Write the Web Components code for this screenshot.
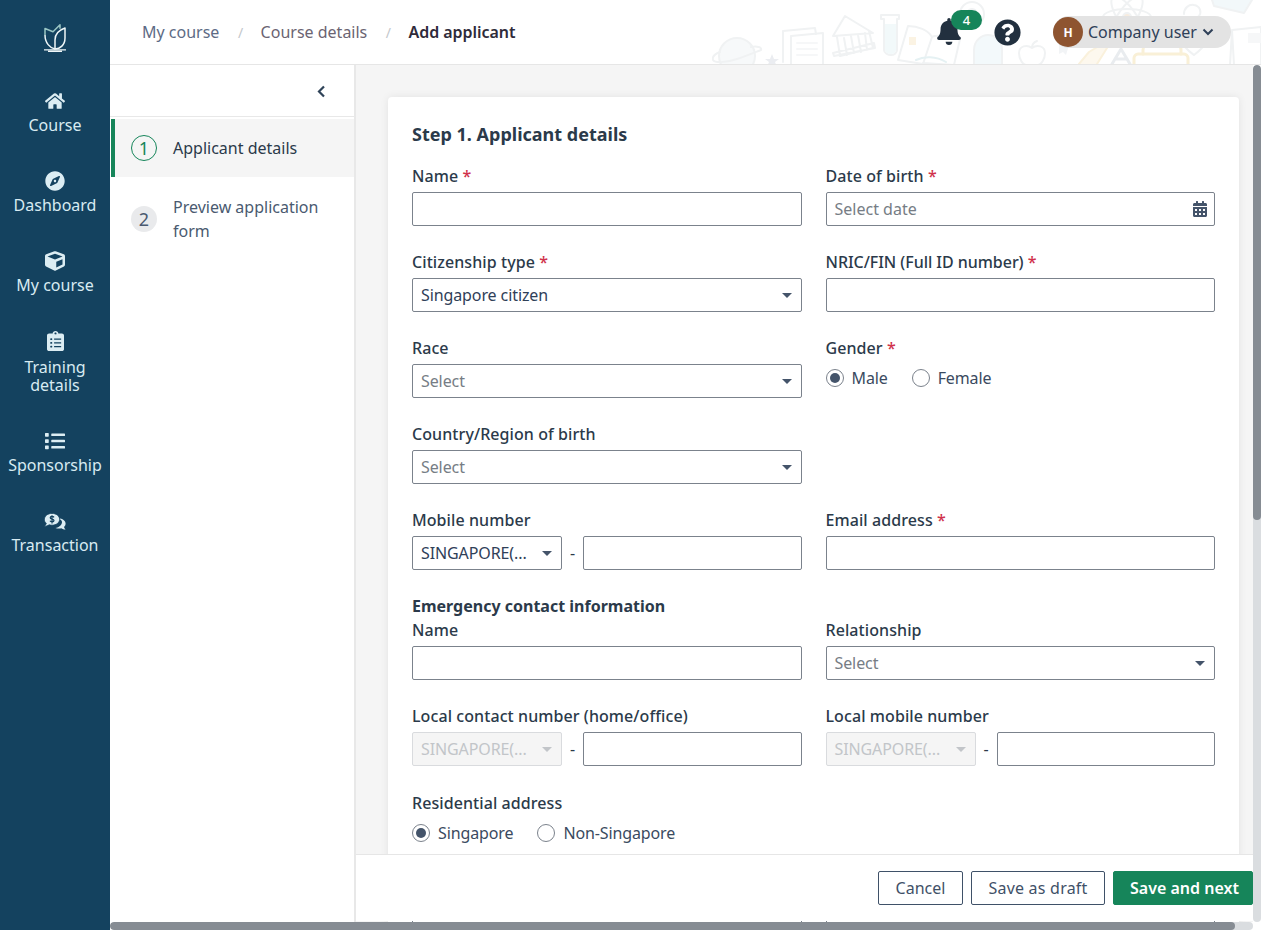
<!DOCTYPE html>
<html lang="en">
<head>
<meta charset="utf-8">
<title>Add applicant</title>
<style>
html,body{margin:0;padding:0;height:100%;overflow:hidden;background:#fff;font-family:"Noto Sans","Open Sans",sans-serif;font-size:16px;color:#2b3a4a}
</style>
</head>
<body>
<app-shell>
  <side-nav slot="nav">
    <nav-item icon="home">Course</nav-item>
    <nav-item icon="compass">Dashboard</nav-item>
    <nav-item icon="cube">My course</nav-item>
    <nav-item icon="clipboard" tall>Training<br>details</nav-item>
    <nav-item icon="list">Sponsorship</nav-item>
    <nav-item icon="chat">Transaction</nav-item>
  </side-nav>
  <top-bar slot="top"></top-bar>
  <step-panel slot="steps">
    <step-item num="1" active>Applicant details</step-item>
    <step-item num="2">Preview application form</step-item>
  </step-panel>
  <form-area slot="main">
    <form-card heading="Step 1. Applicant details">
      <form-field label="Name" required><text-box></text-box></form-field>
      <form-field label="Date of birth" required><text-box placeholder="Select date" calendar></text-box></form-field>
      <form-field label="Citizenship type" required><select-box>Singapore citizen</select-box></form-field>
      <form-field label="NRIC/FIN (Full ID number)" required class="tight"><text-box></text-box></form-field>
      <form-field label="Race"><select-box placeholder>Select</select-box></form-field>
      <form-field label="Gender" required><radio-group><radio-opt checked>Male</radio-opt><radio-opt>Female</radio-opt></radio-group></form-field>
      <form-field label="Country/Region of birth"><select-box placeholder>Select</select-box></form-field>
      <form-field></form-field>
      <form-field label="Mobile number"><phone-input></phone-input></form-field>
      <form-field label="Email address" required><text-box></text-box></form-field>
      <form-field label="Name" section="Emergency contact information"><text-box></text-box></form-field>
      <form-field label="Relationship" class="low"><select-box placeholder>Select</select-box></form-field>
      <form-field label="Local contact number (home/office)"><phone-input disabled></phone-input></form-field>
      <form-field label="Local mobile number"><phone-input disabled></phone-input></form-field>
      <form-field label="Residential address" class="nudge"><radio-group><radio-opt checked>Singapore</radio-opt><radio-opt>Non-Singapore</radio-opt></radio-group></form-field>
      <form-field></form-field>
      <form-field class="spacer"><text-box></text-box></form-field>
      <form-field class="spacer"><text-box></text-box></form-field>
    </form-card>
    <form-footer slot="footer">
      <app-button width="85">Cancel</app-button>
      <app-button width="134" track>Save as draft</app-button>
      <app-button width="140" primary>Save and next</app-button>
    </form-footer>
  </form-area>
  <scroll-bar slot="vbar" thumb="455"></scroll-bar>
  <scroll-bar slot="hbar" horizontal thumb="1125"></scroll-bar>
</app-shell>

<script>
const ICONS = {
  home:['0 0 576 512','M280.37 148.26L96 300.11V464a16 16 0 0 0 16 16l112.06-.29a16 16 0 0 0 15.92-16V368a16 16 0 0 1 16-16h64a16 16 0 0 1 16 16v95.64a16 16 0 0 0 16 16.05L464 480a16 16 0 0 0 16-16V300L295.67 148.26a12.19 12.19 0 0 0-15.3 0zM571.6 251.47L488 182.56V44.05a12 12 0 0 0-12-12h-56a12 12 0 0 0-12 12v72.61L318.47 43a48 48 0 0 0-61 0L4.34 251.47a12 12 0 0 0-1.6 16.9l25.5 31A12 12 0 0 0 45.15 301l235.22-193.74a12.19 12.19 0 0 1 15.3 0L530.9 301a12 12 0 0 0 16.9-1.6l25.5-31a12 12 0 0 0-1.7-16.93z'],
  compass:['0 0 496 512','M225.38 233.37c-12.5 12.5-12.5 32.76 0 45.25 12.49 12.5 32.76 12.5 45.25 0 12.5-12.5 12.5-32.76 0-45.25-12.5-12.49-32.76-12.49-45.25 0zM248 8C111.03 8 0 119.03 0 256s111.03 248 248 248 248-111.03 248-248S384.97 8 248 8zm126.14 148.05L308.17 300.4a31.938 31.938 0 0 1-15.77 15.77l-144.34 65.97c-16.65 7.61-33.81-9.55-26.2-26.2l65.98-144.35a31.938 31.938 0 0 1 15.77-15.77l144.34-65.97c16.65-7.6 33.8 9.55 26.19 26.2z'],
  cube:['0 0 512 512','M239.1 6.3l-208 78c-18.7 7-31.1 25-31.1 45v225.1c0 18.2 10.3 34.8 26.5 42.9l208 104c13.5 6.8 29.4 6.8 42.9 0l208-104c16.3-8.1 26.5-24.8 26.5-42.9V129.3c0-20-12.4-37.9-31.1-44.9l-208-78C262 2.2 250 2.2 239.1 6.3zM256 68.4l192 72v1.1l-192 78-192-78v-1.1l192-72zm32 356V275.5l160-65v133.9l-160 80z'],
  clipboard:['0 0 384 512','M336 64h-80c0-35.3-28.7-64-64-64s-64 28.7-64 64H48C21.5 64 0 85.5 0 112v352c0 26.5 21.5 48 48 48h288c26.5 0 48-21.5 48-48V112c0-26.5-21.5-48-48-48zM96 424c-13.3 0-24-10.7-24-24s10.7-24 24-24 24 10.7 24 24-10.7 24-24 24zm0-96c-13.3 0-24-10.7-24-24s10.7-24 24-24 24 10.7 24 24-10.7 24-24 24zm0-96c-13.3 0-24-10.7-24-24s10.7-24 24-24 24 10.7 24 24-10.7 24-24 24zm96-192c13.3 0 24 10.7 24 24s-10.7 24-24 24-24-10.7-24-24 10.7-24 24-24zm128 368c0 4.4-3.6 8-8 8H168c-4.4 0-8-3.6-8-8v-16c0-4.4 3.6-8 8-8h144c4.4 0 8 3.6 8 8v16zm0-96c0 4.4-3.6 8-8 8H168c-4.4 0-8-3.6-8-8v-16c0-4.4 3.6-8 8-8h144c4.4 0 8 3.6 8 8v16zm0-96c0 4.4-3.6 8-8 8H168c-4.4 0-8-3.6-8-8v-16c0-4.4 3.6-8 8-8h144c4.4 0 8 3.6 8 8v16z'],
  list:['0 0 512 512','M80 368H16a16 16 0 0 0-16 16v64a16 16 0 0 0 16 16h64a16 16 0 0 0 16-16v-64a16 16 0 0 0-16-16zm0-320H16A16 16 0 0 0 0 64v64a16 16 0 0 0 16 16h64a16 16 0 0 0 16-16V64a16 16 0 0 0-16-16zm0 160H16a16 16 0 0 0-16 16v64a16 16 0 0 0 16 16h64a16 16 0 0 0 16-16v-64a16 16 0 0 0-16-16zm416 176H176a16 16 0 0 0-16 16v32a16 16 0 0 0 16 16h320a16 16 0 0 0 16-16v-32a16 16 0 0 0-16-16zm0-320H176a16 16 0 0 0-16 16v32a16 16 0 0 0 16 16h320a16 16 0 0 0 16-16V80a16 16 0 0 0-16-16zm0 160H176a16 16 0 0 0-16 16v32a16 16 0 0 0 16 16h320a16 16 0 0 0 16-16v-32a16 16 0 0 0-16-16z'],
  bell:['0 0 448 512','M224 512c35.32 0 63.97-28.65 63.97-64H160.03c0 35.35 28.65 64 63.97 64zm215.39-149.71c-19.32-20.76-55.47-51.99-55.47-154.29 0-77.7-54.48-139.9-127.94-155.16V32c0-17.67-14.32-32-31.98-32s-31.98 14.33-31.98 32v20.84C118.56 68.1 64.08 130.3 64.08 208c0 102.3-36.15 133.53-55.47 154.29-6 6.45-8.66 14.16-8.61 21.71.11 16.4 12.98 32 32.1 32h383.8c19.12 0 32-15.6 32.1-32 .05-7.55-2.61-15.27-8.61-21.71z'],
  help:['0 0 512 512','M504 256c0 136.997-111.043 248-248 248S8 392.997 8 256C8 119.083 119.043 8 256 8s248 111.083 248 248zM262.655 90c-54.497 0-89.255 22.957-116.549 63.758-3.536 5.286-2.353 12.415 2.715 16.258l34.699 26.31c5.205 3.947 12.621 3.008 16.665-2.122 17.864-22.658 30.113-35.797 57.303-35.797 20.429 0 45.698 13.148 45.698 32.958 0 14.976-12.363 22.667-32.534 33.976C247.128 238.528 216 254.941 216 296v4c0 6.627 5.373 12 12 12h56c6.627 0 12-5.373 12-12v-1.333c0-28.462 83.186-29.647 83.186-106.667 0-58.002-60.165-102-116.531-102zM256 338c-25.365 0-46 20.635-46 46 0 25.364 20.635 46 46 46s46-20.636 46-46c0-25.365-20.635-46-46-46z'],
  calendar:['0 0 448 512','M0 464c0 26.5 21.5 48 48 48h352c26.5 0 48-21.5 48-48V192H0v272zm320-196c0-6.6 5.4-12 12-12h40c6.6 0 12 5.4 12 12v40c0 6.6-5.4 12-12 12h-40c-6.6 0-12-5.4-12-12v-40zm0 128c0-6.6 5.4-12 12-12h40c6.6 0 12 5.4 12 12v40c0 6.6-5.4 12-12 12h-40c-6.6 0-12-5.4-12-12v-40zM192 268c0-6.6 5.4-12 12-12h40c6.6 0 12 5.4 12 12v40c0 6.6-5.4 12-12 12h-40c-6.6 0-12-5.4-12-12v-40zm0 128c0-6.6 5.4-12 12-12h40c6.6 0 12 5.4 12 12v40c0 6.6-5.4 12-12 12h-40c-6.6 0-12-5.4-12-12v-40zM64 268c0-6.6 5.4-12 12-12h40c6.6 0 12 5.4 12 12v40c0 6.6-5.4 12-12 12H76c-6.6 0-12-5.4-12-12v-40zm0 128c0-6.6 5.4-12 12-12h40c6.6 0 12 5.4 12 12v40c0 6.6-5.4 12-12 12H76c-6.6 0-12-5.4-12-12v-40zM400 64h-48V16c0-8.8-7.2-16-16-16h-32c-8.8 0-16 7.2-16 16v48H160V16c0-8.8-7.2-16-16-16h-32c-8.8 0-16 7.2-16 16v48H48C21.5 64 0 85.5 0 112v48h448v-48c0-26.5-21.5-48-48-48z']
};
const NAVY='#14425f';
function svgIcon(name,w,h,fill,extra=''){
  if(name==='chat'){
    return `<svg width="22" height="17" viewBox="0 0 22 17" aria-hidden="true">
      <path fill="${fill}" d="M13 5.5c4.7-.6 8.6 1.6 8.6 5 0 1.4-.6 2.6-1.6 3.5.3 1 .9 1.9 1.6 2.6-1.7 0-3.2-.5-4.3-1.3-1.8.5-4.2.4-5.9-.4 4-.6 6.6-3.1 6.6-6 0-1.4-1.1-2.7-5-3.4z"/>
      <path fill="${fill}" stroke="${NAVY}" stroke-width=".8" d="M8 .4c4.3 0 7.6 2.6 7.6 5.9s-3.3 5.9-7.6 5.9c-1 0-2-.2-2.9-.4-1.2.9-2.7 1.5-4.7 1.5.8-.8 1.6-1.9 1.9-3.1C.9 9.5.4 8 .4 6.3.4 3 3.7.4 8 .4z"/>
      <path fill="none" stroke="${NAVY}" stroke-width="1.2" d="M10 4.4c-.4-.7-1.2-1-2-1-1 0-1.8.5-1.8 1.3 0 1.8 3.8.9 3.8 2.8 0 .8-.9 1.3-1.9 1.3s-1.8-.4-2.1-1.1M8 2.2v8.2"/>
    </svg>`;
  }
  const [vb,d]=ICONS[name];
  return `<svg width="${w}" height="${h}" viewBox="${vb}" ${extra} aria-hidden="true" style="display:block"><path fill="${fill}" d="${d}"/></svg>`;
}
const NAV_SIZE={home:[20,18],compass:[20,20],cube:[20,20],clipboard:[17,20,'preserveAspectRatio="none"'],list:[20,20],chat:[22,17]};
function comp(tag,render){
  customElements.define(tag,class extends HTMLElement{
    constructor(){super();this.attachShadow({mode:'open'}).innerHTML=render(this);}
  });
}

comp('app-button',h=>{
  const p=h.hasAttribute('primary');
  return `<style>
:host{display:inline-flex}
button{font:inherit;font-weight:${p?600:400};width:${h.getAttribute('width')}px;height:34px;padding:${p?'0 0 0 16px':'0'};text-align:${p?'left':'center'};box-sizing:border-box;border-radius:2px;cursor:pointer;
${h.hasAttribute('track')?'letter-spacing:.22px;':''}
${p?'background:#16855a;border:1px solid #16855a;color:#fff;':'background:#fff;border:1px solid #3f5168;color:#3f5168;'}white-space:nowrap}
</style><button type="button"><slot></slot></button>`;
});

comp('form-footer',()=>`<style>
:host{display:flex;justify-content:flex-end;align-items:flex-start;gap:8px;box-sizing:border-box;height:67px;padding-top:16px;background:#fff;border-top:1px solid #e6e6e6}
</style><slot></slot>`);

comp('text-box',h=>`<style>
:host{display:flex;align-items:center;justify-content:space-between;box-sizing:border-box;height:34px;padding:0 7px 0 8px;background:#fff;border:1px solid #7b828c;border-radius:2px;color:#767d85;white-space:nowrap}
</style><span>${h.getAttribute('placeholder')||''}</span>${h.hasAttribute('calendar')?svgIcon('calendar',14,16,'#44546a'):''}`);

comp('select-box',h=>{
  const dis=h.hasAttribute('disabled'), ph=h.hasAttribute('placeholder');
  return `<style>
:host{display:flex;align-items:center;justify-content:space-between;box-sizing:border-box;height:34px;padding:0 9px 0 8px;white-space:nowrap;border-radius:2px;letter-spacing:-.1px;
${dis?'background:#f5f5f5;border:1px solid #d9dbde;color:#c2c5c9;':`background:#fff;border:1px solid #7b828c;color:${ph?'#767d85':'#2f4058'};`}}
i{display:block;width:0;height:0;border-left:5px solid transparent;border-right:5px solid transparent;border-top:5px solid ${dis?'#c2c5c9':'#44546a'}}
</style><span><slot></slot></span><i></i>`;
});

comp('phone-input',h=>{
  const d=h.hasAttribute('disabled')?'disabled':'';
  return `<style>
:host{display:flex;align-items:center}
select-box{width:150px;flex:none}
b{flex:none;width:21px;text-align:center;font-weight:400;color:#2b3a4a}
text-box{flex:1}
</style><select-box ${d}>SINGAPORE(...</select-box><b>-</b><text-box></text-box>`;
});

comp('radio-opt',h=>`<style>
:host{display:inline-flex;align-items:center;gap:8px;color:#3a4a60;letter-spacing:-.12px}
i{box-sizing:border-box;width:18px;height:18px;border-radius:50%;border:1px solid #7b828c;display:flex;align-items:center;justify-content:center;background:#fff}
u{display:${h.hasAttribute('checked')?'block':'none'};width:10px;height:10px;border-radius:50%;background:#44546a}
</style><i><u></u></i><span><slot></slot></span>`);

comp('radio-group',()=>`<style>:host{display:flex;align-items:center;gap:24px;height:28px}</style><slot></slot>`);

comp('form-field',h=>{
  const label=h.getAttribute('label'), sec=h.getAttribute('section');
  return `<style>
:host{display:block;min-width:0}
:host(.low){align-self:end}
:host(.nudge){margin-top:1px}
:host(.spacer){padding-top:28px}
.sec{font-weight:700;line-height:24px;color:#2b3a4a}
label{display:block;font-weight:500;line-height:24px;margin-bottom:4px;color:#2b3a4a;white-space:nowrap;letter-spacing:.08px}
:host(.tight) label{letter-spacing:-.04px}
em{font-style:normal;color:#d0324b}
</style>${sec?`<div class="sec">${sec}</div>`:''}${label?`<label>${label}${h.hasAttribute('required')?' <em>*</em>':''}</label>`:''}<slot></slot>`;
});

comp('form-card',h=>`<style>
:host{display:block;background:#fff;border-radius:4px;box-shadow:0 0 8px rgba(0,0,0,.08);padding:24px 24px 60px}
h2{margin:0 0 17px;font-size:18px;line-height:26px;font-weight:700;color:#2b3a4a}
.g{display:grid;grid-template-columns:1fr 1fr;column-gap:24px;row-gap:24px}
</style><h2>${h.getAttribute('heading')}</h2><div class="g"><slot></slot></div>`);

comp('form-area',()=>`<style>
:host{display:block;position:relative;overflow:hidden;background:#f5f5f5;min-width:0;min-height:0}
.scroll{padding:32px 14px 0 32px}
.foot{position:absolute;left:0;right:0;bottom:1px;z-index:2}
</style><div class="scroll"><slot></slot></div><div class="foot"><slot name="footer"></slot></div>`);

comp('step-item',h=>{
  const a=h.hasAttribute('active');
  return `<style>
:host{display:flex;align-items:center;gap:16px;box-sizing:border-box;margin-left:1px;padding:${a?'17px':'18px'} 24px ${a?'17px':'10px'} ${a?'16px':'20px'};line-height:24px;
${a?'background:#f5f5f5;border-left:4px solid #16855a;color:#2b3a4a;':'color:#4a5a70;'}}
i{flex:none;box-sizing:border-box;width:26px;height:26px;margin:-1px 0;border-radius:50%;display:flex;align-items:center;justify-content:center;font-style:normal;font-size:18px;
${a?'border:1px solid #16855a;color:#16855a;':'background:#e9eaec;color:#4a5a70;'}}
</style><i>${h.getAttribute('num')}</i><span><slot></slot></span>`;
});

comp('step-panel',()=>`<style>
:host{display:block;background:#fff;border-right:2px solid #e8e8e8;box-sizing:border-box}
.head{display:flex;align-items:center;justify-content:flex-end;height:51px;padding-right:28px;border-bottom:1px solid #e8e8e8;margin-bottom:2px;box-sizing:content-box}
svg{display:block;margin-top:1px}
</style><div class="head"><svg width="9" height="13" viewBox="0 0 9 13"><path d="M7 1.5L2 6.5l5 5" fill="none" stroke="#2f4358" stroke-width="2.2"/></svg></div><slot></slot>`);

comp('nav-item',h=>{
  const name=h.getAttribute('icon'), s=NAV_SIZE[name];
  return `<style>
:host{display:flex;flex-direction:column;align-items:center;color:#d8ebf2;text-align:center;line-height:18px;white-space:nowrap}
.ic{height:20px;display:flex;align-items:center;justify-content:center}
.t{margin-top:${h.hasAttribute('tall')?7:5}px}
</style><div class="ic">${svgIcon(name,s[0],s[1],'#dcedf3',s[2]||'')}</div><div class="t"><slot></slot></div>`;
});

comp('side-nav',()=>`<style>
:host{display:flex;flex-direction:column;background:${NAVY};padding-top:24px;box-sizing:border-box;overflow:hidden}
.logo{display:flex;justify-content:center;height:28px;margin-bottom:39px}
.items{display:flex;flex-direction:column;gap:37px}
</style><div class="logo"><svg width="22" height="28" viewBox="0 0 22 28" fill="none" aria-hidden="true">
<path d="M1 11V4.5l8 3.2L16 .8v4" stroke="#9ac6c4" stroke-width="1.5" stroke-linejoin="round"/>
<path d="M1 11c0 8 5 13 10 14" stroke="#eef6f8" stroke-width="1.5"/>
<path d="M11 25V16c0-7 4-10 10-12v10c0 7-5 11-10 11z" stroke="#eef6f8" stroke-width="1.5" stroke-linejoin="round"/>
<path d="M0 25.8h22M4 27.4h14" stroke="#eef6f8" stroke-width="1.2"/>
</svg></div><div class="items"><slot></slot></div>`);

const DOODLES=`<svg class="doodle" viewBox="712 0 549 64" width="549" height="64" aria-hidden="true" fill="none" stroke="#f0f2f3" stroke-width="2" stroke-linejoin="round" stroke-linecap="round">
<circle cx="737" cy="56" r="18" fill="#f7f9fa"/><path d="M720 52c-5 2-8 5-7 8 2 3 12 3 24-1s21-8 24-9c1-3-4-4-10-3"/>
<path d="M772 54l2 5h5l-4 3 2 5-5-3-5 3 2-5-4-3h5z" fill="#ebedf1" stroke="none"/>
<path d="M783 62V31l32-3 1 6"/><path d="M791 36l32-3v32M791 36v29"/><path d="M797 43h20M797 49h20M797 55h20" stroke="#f6f7f8"/>
<path d="M833 36l12-20 28 17zM837 37l3 19 33-8-4-17M844 38l3 17M851 36l3 17M858 35l3 17M865 33l2 17M833 53l41-10 1 5-41 8z"/>
<path d="M881 15h18v4h-2v31c0 3-3 5-6 5s-7-2-7-5V19h-3z" /><path d="M885 24h11v26c0 2-2 4-5 4s-6-2-6-4z" fill="#f2f9fa" stroke="none"/>
<path d="M908 26c10 0 20 4 24 11l-9 27-25-4zM932 37c3-2 14-2 28 2l-6 26-31-2"/><rect x="909" y="37" width="7" height="8" fill="#fbf3e3" stroke="none"/>
<path d="M916 60c8-4 20-4 30 2" stroke="#e5f1f3"/>
<circle cx="972" cy="14" r="12"/><circle cx="972" cy="14" r="5" fill="#f5f6f7"/>
<path d="M974 64V50c0-10 8-15 14-15 7 0 14 6 14 15v14" fill="#f3f9fb"/>
<path d="M1032 48c-5-4-13-2-13 5 0 6 4 12 7 12h12c3 0 7-6 7-12 0-7-8-9-13-5zM1032 48c0-3 2-6 5-7"/>
<path d="M1059 43l10 2-3 10-3-3-4 2z" fill="#f2f4f6" stroke="none"/>
<path d="M1079 64l10-12 15-9 3 5-10 16" fill="#fdf8ee" stroke="#faf1dc"/>
<path d="M1112 64l9-15 9 15M1116 59h9" stroke="#e9ecef" stroke-width="3"/>
<path d="M1134 65v-7c0-2 2-4 4-4h46c2 0 4 2 4 4v7" stroke="#f9f0d7" stroke-width="3"/><path d="M1143 54v-4c0-6 8-11 18-11s20 5 20 11v4" stroke="#f9f0d7" stroke-width="3"/>
<ellipse cx="1127" cy="17" rx="9" ry="24" transform="rotate(-35 1127 17)"/><ellipse cx="1127" cy="17" rx="9" ry="24" transform="rotate(35 1127 17)"/><ellipse cx="1127" cy="17" rx="24" ry="8"/><circle cx="1127" cy="17" r="4" fill="#f7ecdf"/>
<path d="M1184 14c0-6 5-10 10-9 6 1 8 7 5 11-3 3-5 4-6 9M1192 32l1 2"/>
<path d="M1191 36c-5-4-10 0-9 5 1 6 8 11 12 14 4-3 11-9 12-14 1-6-5-9-11-4"/>
<path d="M1212 0l2 6 30 7 8-13" fill="#f2f8fa"/>
<path d="M1232 30l29-3v38h-27zM1232 30l-2 35"/><rect x="1248" y="33" width="13" height="10" fill="#f6f7f8" stroke="none"/>
</svg>`;

comp('top-bar',()=>`<style>
:host{display:flex;align-items:center;position:relative;box-sizing:border-box;height:65px;padding:0 30px 0 32px;background:#fff;border-bottom:1px solid #e6e6e6;overflow:hidden}
.doodle{position:absolute;left:602px;top:0}
nav{display:flex;align-items:center;gap:18px;position:relative;color:#5d6b85}
nav span:nth-of-type(2){color:#6b6472}
nav i{font-style:normal;color:#c3c7cc;font-size:14px;margin:0 -.5px 0 .5px}
nav b{font-weight:600;color:#2f2b3a;letter-spacing:-.05px}
.right{margin-left:auto;display:flex;align-items:center;position:relative}
.bell{position:relative;width:24px;height:27px;margin-right:33px;margin-top:-1px}
.badge{position:absolute;left:14px;top:-8px;width:31px;height:20px;border-radius:10px;background:#16855a;color:#fff;font-size:13px;font-weight:500;display:flex;align-items:center;justify-content:center}
.help{margin-right:32px}
.pill{display:flex;align-items:center;width:178px;height:32px;box-sizing:border-box;border-radius:16px;background:#e3e3e3;color:#2f4058}
.av{flex:none;width:30px;height:30px;border-radius:50%;background:#8e5430;color:#fff;font-size:12px;font-weight:700;display:flex;align-items:center;justify-content:center;margin-right:5px}
.pill svg{margin-left:5px}
</style>${DOODLES}
<nav><span>My course</span><i>/</i><span>Course details</span><i>/</i><b>Add applicant</b></nav>
<div class="right">
  <div class="bell">${svgIcon('bell',24,27,'#22303f')}<div class="badge">4</div></div>
  <div class="help">${svgIcon('help',27,27,'#22303f')}</div>
  <div class="pill"><div class="av">H</div><span>Company user</span><svg width="12" height="8" viewBox="0 0 12 8" aria-hidden="true"><path d="M1.5 1.5L6 6l4.5-4.5" fill="none" stroke="#2f4058" stroke-width="2"/></svg></div>
</div>`);

comp('scroll-bar',h=>{
  const hz=h.hasAttribute('horizontal'), t=h.getAttribute('thumb');
  return `<style>
:host{display:flex;flex-direction:${hz?'row':'column'};background:#dadde0;border-radius:4px;overflow:hidden}
div{flex:0 0 ${t}px;background:#868c93;border-radius:4px}
</style><div></div>`;
});

comp('app-shell',()=>`<style>
:host{display:grid;grid-template-columns:110px 246px 1fr 8px;grid-template-rows:65px 857px 8px;height:930px;width:1261px;overflow:hidden}
::slotted([slot=nav]){grid-column:1;grid-row:1 / 4}
::slotted([slot=top]){grid-column:2 / 5;grid-row:1}
::slotted([slot=steps]){grid-column:2;grid-row:2 / 3}
::slotted([slot=main]){grid-column:3;grid-row:2}
::slotted([slot=vbar]){grid-column:4;grid-row:2}
::slotted([slot=hbar]){grid-column:2 / 4;grid-row:3}
</style><slot name="nav"></slot><slot name="top"></slot><slot name="steps"></slot><slot name="main"></slot><slot name="vbar"></slot><slot name="hbar"></slot>`);
</script>
</body>
</html>
